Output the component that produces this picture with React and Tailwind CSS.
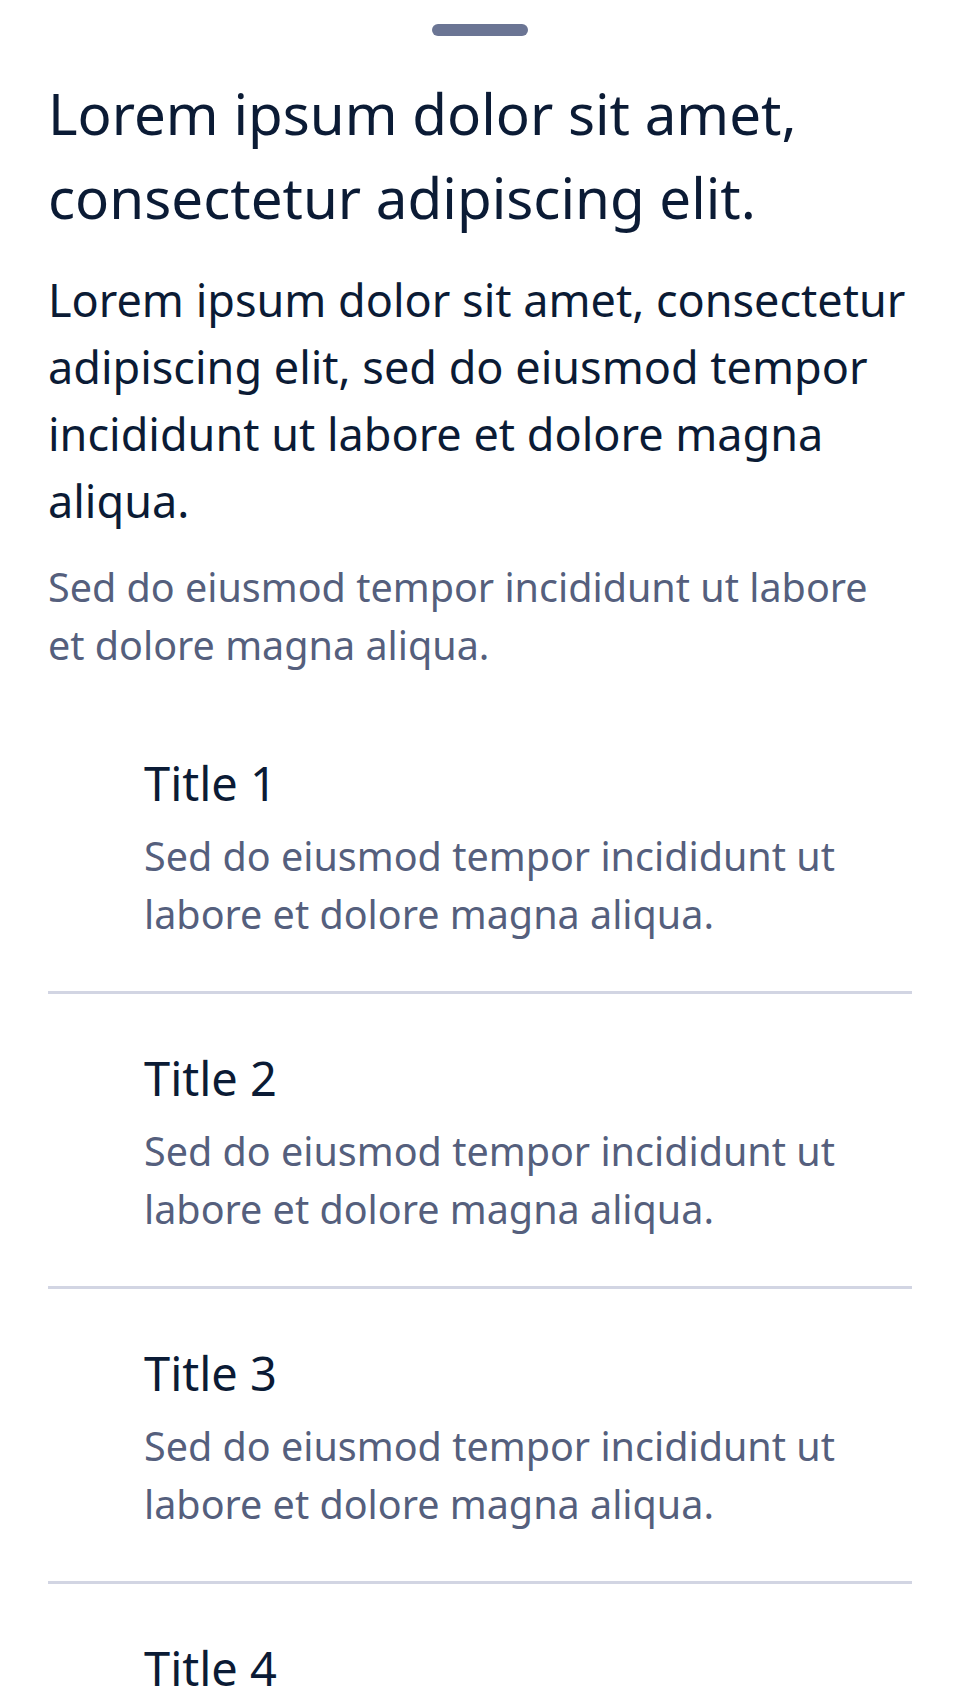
import React from "react";

const items = [
  { id: 1, title: "Title 1" },
  { id: 2, title: "Title 2" },
  { id: 3, title: "Title 3" },
  { id: 4, title: "Title 4" },
];

const desc = "Sed do eiusmod tempor incididunt ut labore et dolore magna aliqua.";

const ListItem = ({ item }) => {
  return (
    <div className="border-b-[3px] border-[#d2d5e3]">
      <div className="pt-[56px] pb-[48px] pl-[96px] pr-[40px]">
        <div className="text-[47px] leading-[56px] text-[#0b1b35]">{item.title}</div>
        <p className="mt-[16px] text-[39.5px] leading-[58px] text-[#555f7d]">{desc}</p>
      </div>
    </div>
  );
};

const App = () => {
  return (
    <div
      className="h-[1704px] w-full overflow-hidden bg-white"
      style={{ fontFamily: '"Noto Sans", "Open Sans", sans-serif' }}
    >
      <div className="flex justify-center pt-[24px]">
        <div className="h-[12px] w-[96px] rounded-full bg-[#6b7594]" />
      </div>

      <div className="px-12">
        <h1 className="mt-[36px] text-[56.5px] leading-[84px] text-[#0b1b35]">
          Lorem ipsum dolor sit amet, consectetur adipiscing elit.
        </h1>
        <p className="mt-[26px] text-[45px] leading-[67px] text-[#0b1b35]">
          Lorem ipsum dolor sit amet, consectetur adipiscing elit, sed do eiusmod tempor
          incididunt ut labore et dolore magna aliqua.
        </p>
        <p className="mt-[24px] text-[39.5px] leading-[58px] text-[#555f7d]">
          Sed do eiusmod tempor incididunt ut labore et dolore magna aliqua.
        </p>

        <div className="mt-[25px]">
          {items.map((item) => (
            <ListItem key={item.id} item={item} />
          ))}
        </div>
      </div>
    </div>
  );
};

export default App;
